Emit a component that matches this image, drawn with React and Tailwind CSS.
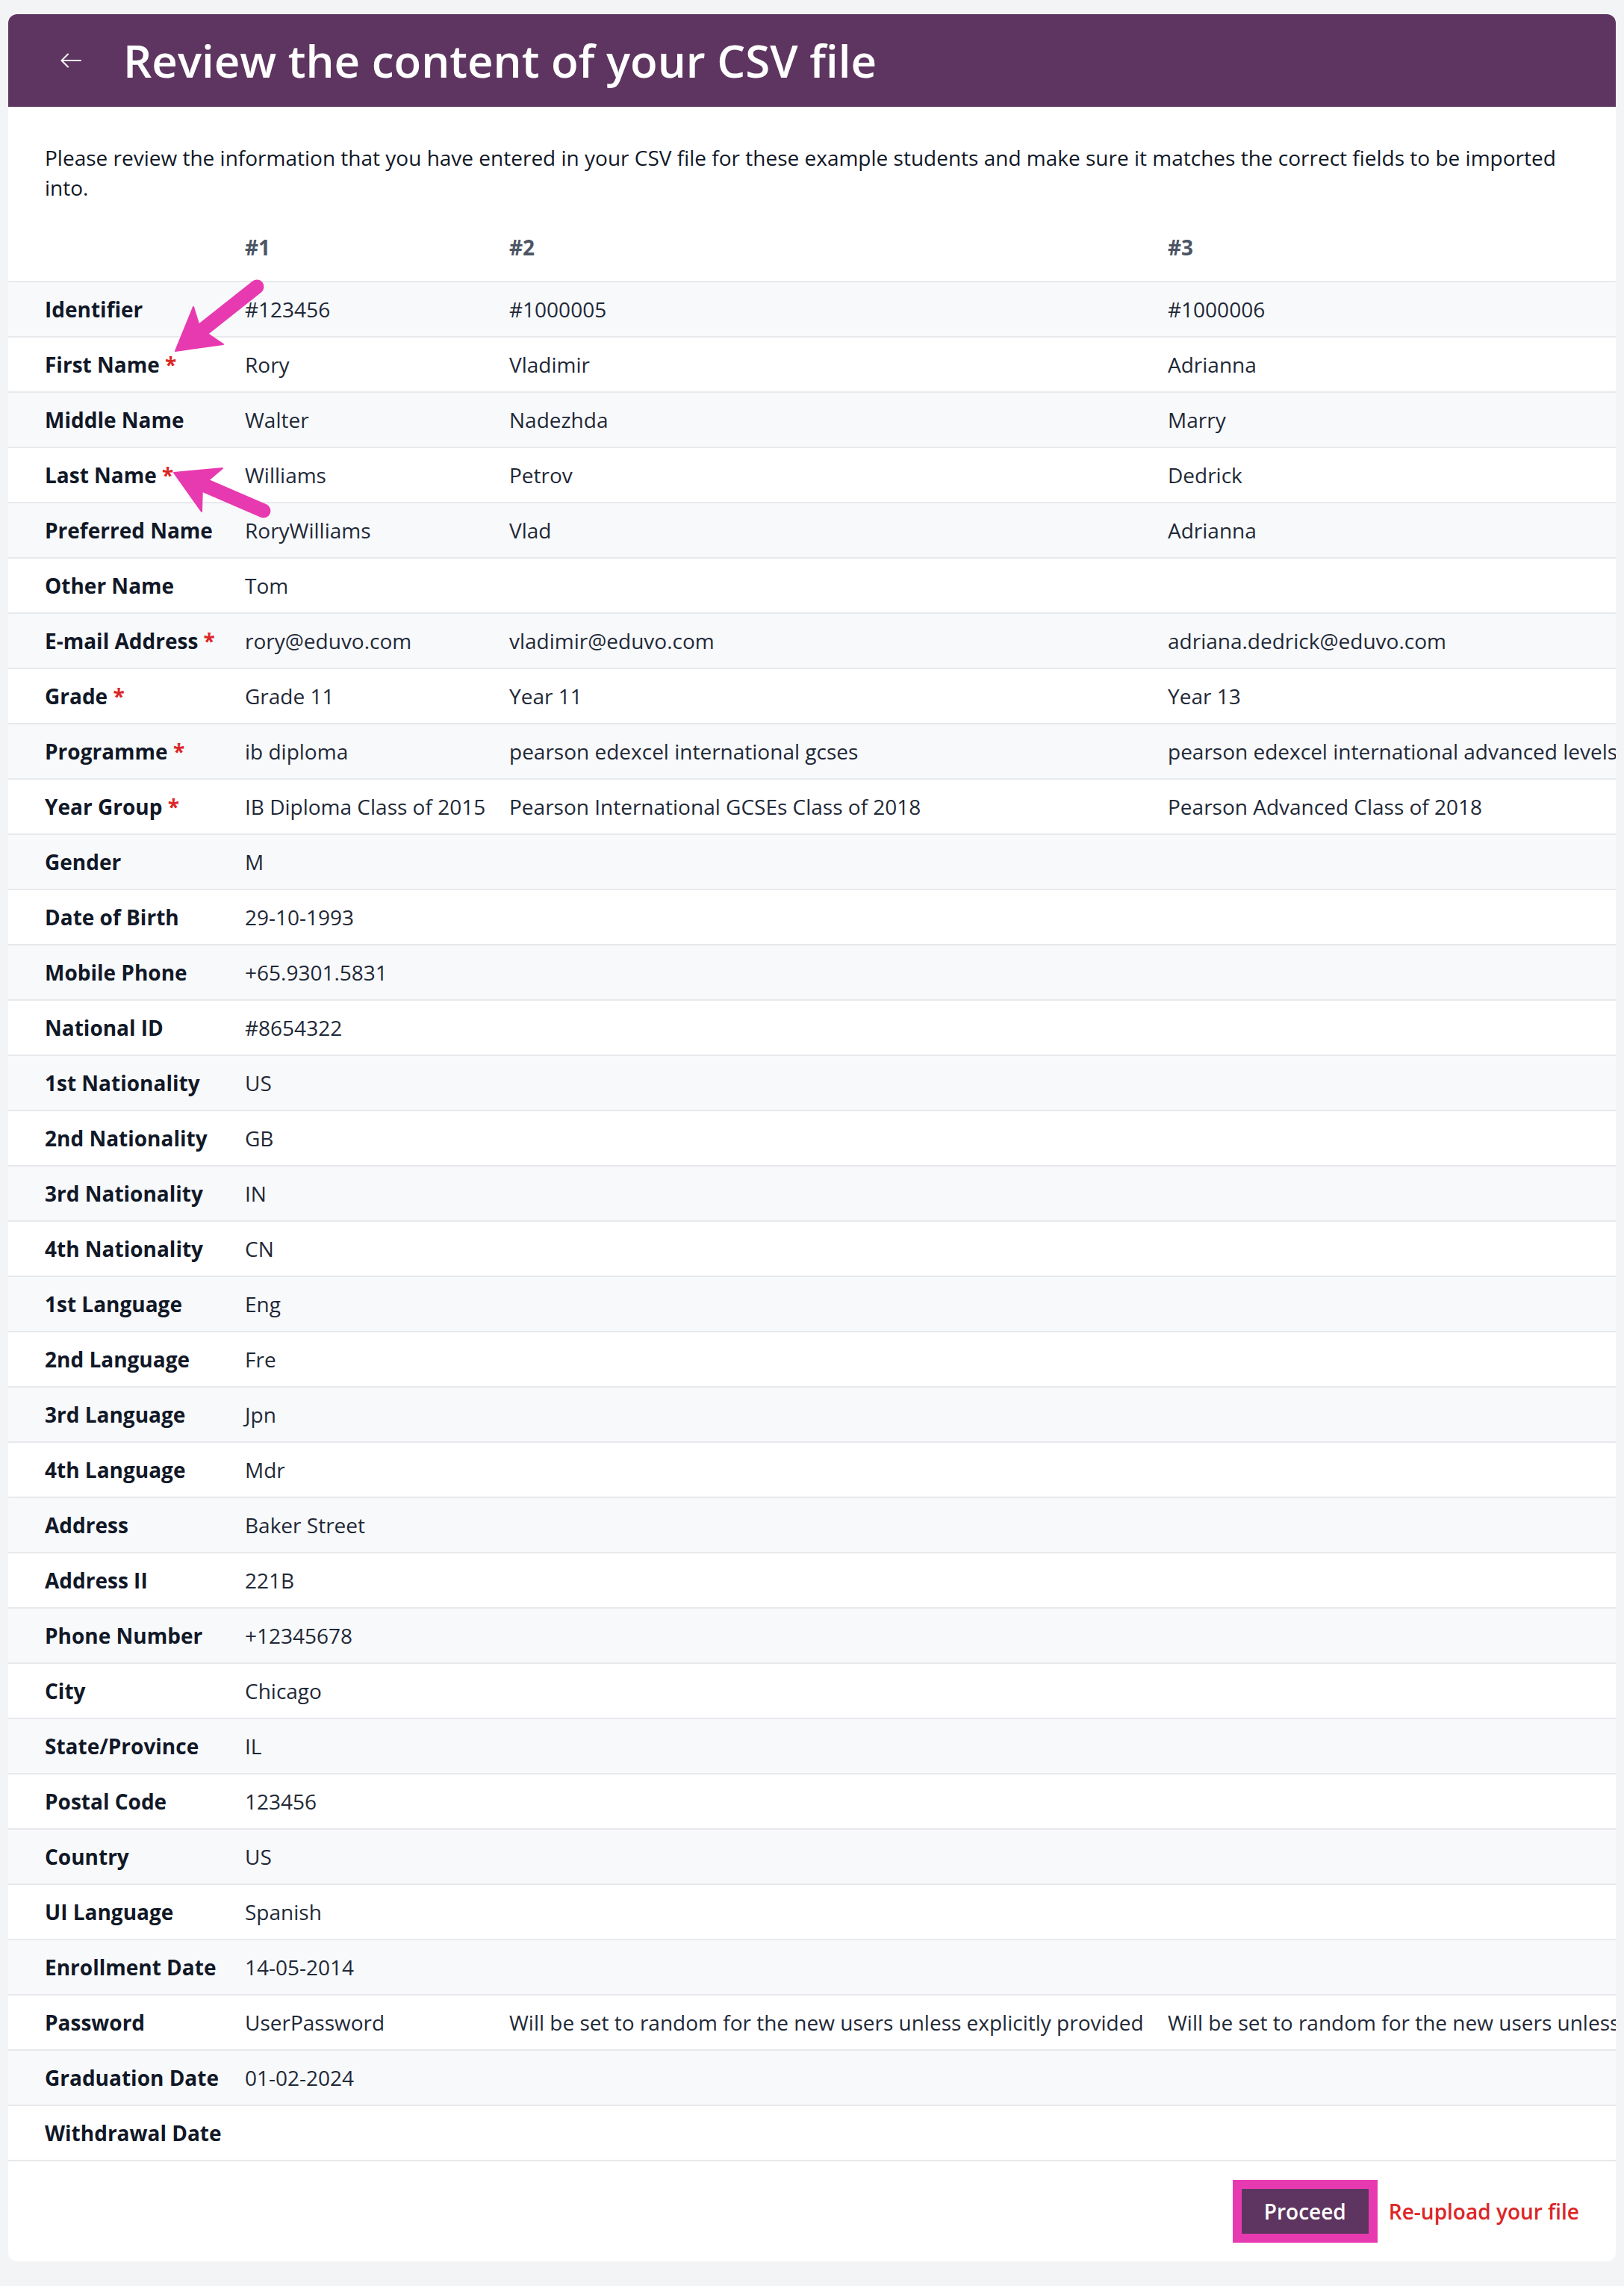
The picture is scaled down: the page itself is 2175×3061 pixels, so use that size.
import React from 'react';

// rows of the csv preview: label, required, then one value per example student
const rows = [
    ['Identifier', false, '#123456', '#1000005', '#1000006'],
    ['First Name', true, 'Rory', 'Vladimir', 'Adrianna'],
    ['Middle Name', false, 'Walter', 'Nadezhda', 'Marry'],
    ['Last Name', true, 'Williams', 'Petrov', 'Dedrick'],
    ['Preferred Name', false, 'RoryWilliams', 'Vlad', 'Adrianna'],
    ['Other Name', false, 'Tom', '', ''],
    ['E-mail Address', true, 'rory@eduvo.com', 'vladimir@eduvo.com', 'adriana.dedrick@eduvo.com'],
    ['Grade', true, 'Grade 11', 'Year 11', 'Year 13'],
    ['Programme', true, 'ib diploma', 'pearson edexcel international gcses', 'pearson edexcel international advanced levels'],
    ['Year Group', true, 'IB Diploma Class of 2015', 'Pearson International GCSEs Class of 2018', 'Pearson Advanced Class of 2018'],
    ['Gender', false, 'M', '', ''],
    ['Date of Birth', false, '29-10-1993', '', ''],
    ['Mobile Phone', false, '+65.9301.5831', '', ''],
    ['National ID', false, '#8654322', '', ''],
    ['1st Nationality', false, 'US', '', ''],
    ['2nd Nationality', false, 'GB', '', ''],
    ['3rd Nationality', false, 'IN', '', ''],
    ['4th Nationality', false, 'CN', '', ''],
    ['1st Language', false, 'Eng', '', ''],
    ['2nd Language', false, 'Fre', '', ''],
    ['3rd Language', false, 'Jpn', '', ''],
    ['4th Language', false, 'Mdr', '', ''],
    ['Address', false, 'Baker Street', '', ''],
    ['Address II', false, '221B', '', ''],
    ['Phone Number', false, '+12345678', '', ''],
    ['City', false, 'Chicago', '', ''],
    ['State/Province', false, 'IL', '', ''],
    ['Postal Code', false, '123456', '', ''],
    ['Country', false, 'US', '', ''],
    ['UI Language', false, 'Spanish', '', ''],
    ['Enrollment Date', false, '14-05-2014', '', ''],
    ['Password', false, 'UserPassword', 'Will be set to random for the new users unless explicitly provided', 'Will be set to random for the new users unless explicitly provided'],
    ['Graduation Date', false, '01-02-2024', '', ''],
    ['Withdrawal Date', false, '', '', ''],
];

// pink annotation arrows drawn over the table
const Arrows = () => (
    <svg
        className="pointer-events-none absolute left-0 top-0"
        width="2175"
        height="3061"
        viewBox="0 0 2175 3061"
    >
        <g fill="#e83ab0" stroke="#e83ab0" strokeLinejoin="round">
            <line x1="344" y1="384" x2="272" y2="441" strokeWidth="19" strokeLinecap="round" />
            <polygon points="235,470 259,411 268,440 299,461" strokeWidth="2" />
            <line x1="353" y1="684" x2="272" y2="649" strokeWidth="19" strokeLinecap="round" />
            <polygon points="233,633 298,627 271,650 270,685" strokeWidth="2" />
        </g>
    </svg>
);

const App = () => {
    return (
        <div
            className="relative min-h-[3061px] bg-[#f3f4f6] px-[11px] pt-[19px] pb-[33px]"
            style={{ fontFamily: '"Open Sans", "Noto Sans", sans-serif' }}
        >
            <div className="overflow-hidden rounded-[12px] bg-white">
                {/* Header */}
                <div className="flex h-[124px] items-center bg-[#5e3560] pl-[70px] text-white">
                    <svg width="28" height="20" viewBox="0 0 28 20" fill="none" stroke="white" strokeWidth="2" strokeLinecap="round" strokeLinejoin="round">
                        <path d="M27 10H1.5M10 1.5L1.5 10L10 18.5" />
                    </svg>
                    <h1 className="ml-[56px] text-[60px] font-semibold">
                        Review the content of your CSV file
                    </h1>
                </div>

                {/* Intro */}
                <p className="px-[49px] pt-[48px] text-[28px] leading-[40px] text-[#111827]">
                    Please review the information that you have entered in your CSV file for these example students and make sure it matches the correct fields to be imported into.
                </p>

                {/* Table */}
                <div className="overflow-hidden">
                    <table className="w-max whitespace-nowrap text-left text-[28px] leading-[40px]">
                        <thead>
                            <tr className="font-bold text-[#4b5563]">
                                <th className="w-[317px] min-w-[317px] pt-[40px] pb-[25px] pl-[49px]"></th>
                                <th className="w-[354px] min-w-[354px] pt-[40px] pb-[25px]">#1</th>
                                <th className="w-[882px] min-w-[882px] pt-[40px] pb-[25px]">#2</th>
                                <th className="pt-[40px] pb-[25px] pr-[32px]">#3</th>
                            </tr>
                        </thead>
                        <tbody>
                            {rows.map(([label, required, a, b, c], i) => (
                                <tr
                                    key={label}
                                    className={`border-t-2 border-[#e8e9ec] ${i % 2 === 0 ? 'bg-[#f8f9fb]' : 'bg-white'} ${i === rows.length - 1 ? 'border-b-2' : ''}`}
                                >
                                    <td className="py-[16px] pl-[49px] font-bold text-[#111827]">
                                        {label}
                                        {required && <span className="text-[#dc2626]"> *</span>}
                                    </td>
                                    <td className="py-[16px] text-[#1f2937]">{a}</td>
                                    <td className="py-[16px] text-[#1f2937]">{b}</td>
                                    <td className="py-[16px] pr-[32px] text-[#1f2937]">{c}</td>
                                </tr>
                            ))}
                        </tbody>
                    </table>
                </div>

                {/* Footer actions */}
                <div className="flex items-center justify-end py-[25px] pr-[49px]">
                    <div className="border-[12px] border-[#e83ab0]">
                        <button className="h-[60px] bg-[#5e3560] px-[30px] text-[28px] font-semibold leading-[40px] text-white">
                            Proceed
                        </button>
                    </div>
                    <button className="ml-[15px] text-[28px] font-semibold leading-[40px] text-[#dc2626]">
                        Re-upload your file
                    </button>
                </div>
            </div>
            <Arrows />
        </div>
    );
};

export default App;
